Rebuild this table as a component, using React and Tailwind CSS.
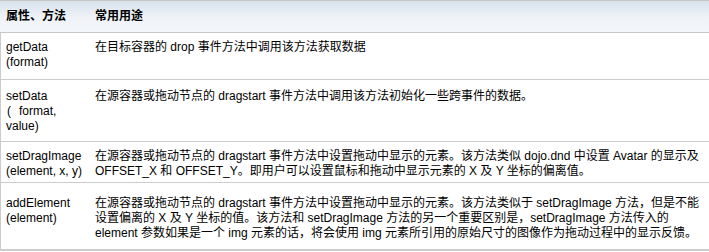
export default function App() {
  const font = "font-['Liberation_Sans','Noto_Sans_CJK_SC',sans-serif]";
  const rows = [
    {
      h: "h-[47px]",
      pt: "pt-[7px]",
      c1: ["getData", "(format)"],
      c2: ["在目标容器的 drop 事件方法中调用该方法获取数据"],
    },
    {
      h: "h-[62px]",
      pt: "pt-[9px]",
      c1: [
        "setData",
        <span key="p">
          <span className="pl-[1px]">(</span>
          <span className="ml-[8px]">format,</span>
        </span>,
        "value)",
      ],
      c2: ["在源容器或拖动节点的 dragstart 事件方法中调用该方法初始化一些跨事件的数据。"],
    },
    {
      h: "h-[41px]",
      pt: "pt-[7px]",
      c1: ["setDragImage", "(element, x, y)"],
      c2: [
        "在源容器或拖动节点的 dragstart 事件方法中设置拖动中显示的元素。该方法类似 dojo.dnd 中设置 Avatar 的显示及",
        "OFFSET_X 和 OFFSET_Y。即用户可以设置鼠标和拖动中显示元素的 X 及 Y 坐标的偏离值。",
      ],
    },
    {
      h: "h-[68px]",
      pt: "pt-[13px]",
      c1: ["addElement", "(element)"],
      c2: [
        "在源容器或拖动节点的 dragstart 事件方法中设置拖动中显示的元素。该方法类似于 setDragImage 方法，但是不能",
        "设置偏离的 X 及 Y 坐标的值。该方法和 setDragImage 方法的另一个重要区别是，setDragImage 方法传入的",
        "element 参数如果是一个 img 元素的话，将会使用 img 元素所引用的原始尺寸的图像作为拖动过程中的显示反馈。",
      ],
    },
  ];
  return (
    <div className={`w-[709px] h-[252px] bg-white text-black text-[12px] leading-[15px] ${font}`}>
      <div className="h-[33px] border-t border-b border-[#c6c6c6] bg-gradient-to-b from-[#d8e1eb] via-[#eef2f7] to-[#f5f7fa] flex items-center font-bold">
        <div className="w-[95px] pl-[6px]">属性、方法</div>
        <div>常用用途</div>
      </div>
      {rows.map((r, i) => (
        <div
          key={i}
          className={`${r.h} ${r.pt} flex border-l border-[#cccccc] ${i === rows.length - 1 ? "border-b-2" : "border-b"}`}
        >
          <div className="w-[94px] pl-[5px] shrink-0">
            {r.c1.map((t, j) => (
              <div key={j} className="whitespace-nowrap">{t}</div>
            ))}
          </div>
          <div>
            {r.c2.map((t, j) => (
              <div key={j} className="whitespace-nowrap">{t}</div>
            ))}
          </div>
        </div>
      ))}
    </div>
  );
}
